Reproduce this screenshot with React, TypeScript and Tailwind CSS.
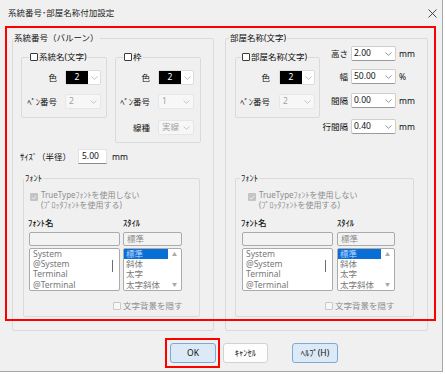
import React from 'react';

function Chevron({ color = '#9a9a9a' }: { color?: string }) {
  return (
    <svg width="7" height="4" viewBox="0 0 7 4" className="shrink-0">
      <path d="M0.5 0.5 L3.5 3.3 L6.5 0.5" fill="none" stroke={color} strokeWidth="0.9" />
    </svg>
  );
}

function Check({ checked = false, disabled = false }: { checked?: boolean; disabled?: boolean }) {
  if (checked) {
    return (
      <span className="flex h-[8px] w-[8px] shrink-0 items-center justify-center rounded-[1px] bg-[#c4c4c4]">
        <svg width="6" height="5" viewBox="0 0 6 5">
          <path d="M0.8 2.6 L2.3 4 L5.2 0.9" fill="none" stroke="#f4f4f4" strokeWidth="0.9" />
        </svg>
      </span>
    );
  }
  return (
    <span
      className={`block h-[8px] w-[8px] shrink-0 rounded-[1px] border ${
        disabled ? 'border-[#c8c8c8] bg-[#f7f7f7]' : 'border-[#3a3a3a] bg-white'
      }`}
    />
  );
}

function ColorCombo() {
  return (
    <div className="flex h-[15px] w-[36px] shrink-0 items-stretch rounded-[2px] border border-[#dcdcdc] bg-white">
      <div className="flex w-[22px] items-center justify-center bg-black leading-none text-white">2</div>
      <div className="flex flex-1 items-center justify-center">
        <Chevron color="#b8b8b8" />
      </div>
    </div>
  );
}

function GrayCombo({ value }: { value: string }) {
  return (
    <div className="flex h-[15px] w-[36px] shrink-0 items-center justify-between rounded-[2px] border border-[#e6e6e6] bg-[#f7f7f7] pl-[3px] pr-[3px] leading-none text-[#a3a3a3]">
      <span>{value}</span>
      <Chevron color="#c0c0c0" />
    </div>
  );
}

function ValueCombo({ value }: { value: string }) {
  return (
    <div className="flex h-[15px] w-[45px] shrink-0 items-center justify-between rounded-[2px] border border-[#cfcfcf] border-b-[#9a9a9a] bg-white pl-[2px] pr-[3px] leading-none">
      <span>{value}</span>
      <Chevron color="#8a8a8a" />
    </div>
  );
}

function Row({ label, labelW, gap, mt, children }: { label: string; labelW: string; gap: string; mt: string; children: React.ReactNode }) {
  return (
    <div className={`flex items-center ${mt}`}>
      <span className={`${labelW} ${gap} shrink-0 text-right leading-[12px]`}>{label}</span>
      {children}
    </div>
  );
}

function FontBox({
  width,
  legendMl,
  checkMl,
  colMl,
  colGap,
  styleW,
}: {
  width: string;
  legendMl: string;
  checkMl: string;
  colMl: string;
  colGap: string;
  styleW: string;
}) {
  return (
    <fieldset className={`h-[145px] ${width} rounded-[2px] border border-[#dadada]`}>
      <legend className={`${legendMl} px-[1px] leading-[12px]`}>ﾌｫﾝﾄ</legend>
      <div className="flex flex-col">
        <div className={`mt-[6px] ${checkMl} flex items-start gap-[3px]`}>
          <span className="mt-[3px]">
            <Check checked />
          </span>
          <div className="text-[8px] leading-[10px] text-[#8d8d8d]">
            <div>TrueTypeﾌｫﾝﾄを使用しない</div>
            <div>(ﾌﾟﾛｯﾀﾌｫﾝﾄを使用する)</div>
          </div>
        </div>

        <div className={`mt-[8px] ${colMl} flex ${colGap}`}>
          {/* font name column */}
          <div className="flex w-[91px] flex-col">
            <span className="-ml-[1px] font-medium leading-[10px]">ﾌｫﾝﾄ名</span>
            <div className="mt-[4px] h-[14px] rounded-[2px] border border-[#ababab] bg-[#f3f3f3]" />
            <div className="mt-[2px] flex h-[43px] rounded-[2px] border border-[#ababab] bg-white">
              <div className="flex-1 pl-[3px] leading-[10.2px] text-[#777]">
                <div>System</div>
                <div>@System</div>
                <div>Terminal</div>
                <div>@Terminal</div>
              </div>
              <div className="flex w-[14px] justify-center pt-[11px]">
                <div className="h-[12px] w-[1px] bg-[#6e6e6e]" />
              </div>
            </div>
          </div>

          {/* style column */}
          <div className={`flex ${styleW} flex-col`}>
            <span className="font-medium leading-[10px]">ｽﾀｲﾙ</span>
            <div className="mt-[4px] flex h-[14px] items-center rounded-[2px] border border-[#ababab] bg-[#f3f3f3] pl-[3px] leading-none text-[#8a8a8a]">
              標準
            </div>
            <div className="mt-[2px] flex h-[43px] rounded-[2px] border border-[#ababab] bg-white">
              <div className="flex-1 leading-[10.2px] text-[#777]">
                <div className="bg-[#0a6fd4] pl-[2px] text-[#bcd8ff]">標準</div>
                <div className="pl-[2px]">斜体</div>
                <div className="pl-[2px]">太字</div>
                <div className="pl-[2px]">太字斜体</div>
              </div>
              <div className="flex w-[13px] flex-col items-center justify-between py-[3px] text-[5px] leading-none text-[#a8a8a8]">
                <span>▲</span>
                <span>▼</span>
              </div>
            </div>
          </div>
        </div>

        <div className="ml-[89px] mt-[10px] flex items-center gap-[2px]">
          <Check disabled />
          <span className="leading-[10px] text-[#8d8d8d]">文字背景を隠す</span>
        </div>
      </div>
    </fieldset>
  );
}

export default function App() {
  return (
    <div className="relative h-[374px] w-[445px] overflow-hidden bg-white font-['Noto_Sans','Noto_Sans_CJK_JP',sans-serif] text-[8.5px] text-[#111]">
      <div className="flex h-[372px] w-[443px] flex-col border-b border-r border-[#a8a8a8] bg-[#f0f0f0]">
        {/* Title bar */}
        <div className="flex h-[26px] shrink-0 items-center justify-between pl-[8px] pr-[5px]">
          <span className="leading-[12px] text-[#222]">系統番号･部屋名称付加設定</span>
          <svg width="9" height="9" viewBox="0 0 9 9">
            <path d="M0.5 0.5 L8.5 8.5 M8.5 0.5 L0.5 8.5" stroke="#333" strokeWidth="0.9" />
          </svg>
        </div>

        {/* Group boxes */}
        <div className="flex gap-[11px] pl-[12px] pt-[6px]">
          {/* 系統番号 */}
          <fieldset className="h-[299px] w-[202px] rounded-[2px] border border-[#dadada]">
            <legend className="px-[1px] leading-[12px]">系統番号（バルーン）</legend>
            <div className="flex flex-col pl-[8px]">
              <div className="mt-[7px] flex items-start gap-[8px]">
                <fieldset className="h-[67px] w-[86px] rounded-[2px] border border-[#dadada]">
                  <legend className="ml-[7px] px-[1px] leading-[12px]">
                    <span className="inline-flex items-center gap-[1px]">
                      <Check />
                      系統名(文字)
                    </span>
                  </legend>
                  <Row label="色" labelW="w-[35px]" gap="mr-[8px]" mt="mt-[6px]">
                    <ColorCombo />
                  </Row>
                  <Row label="ﾍﾟﾝ番号" labelW="w-[35px]" gap="mr-[8px]" mt="mt-[9px]">
                    <GrayCombo value="2" />
                  </Row>
                </fieldset>

                <fieldset className="h-[92px] w-[86px] rounded-[2px] border border-[#dadada]">
                  <legend className="ml-[7px] px-[1px] leading-[12px]">
                    <span className="inline-flex items-center gap-[1px]">
                      <Check />枠
                    </span>
                  </legend>
                  <Row label="色" labelW="w-[34px]" gap="mr-[8px]" mt="mt-[6px]">
                    <ColorCombo />
                  </Row>
                  <Row label="ﾍﾟﾝ番号" labelW="w-[34px]" gap="mr-[8px]" mt="mt-[9px]">
                    <GrayCombo value="1" />
                  </Row>
                  <Row label="線種" labelW="w-[34px]" gap="mr-[8px]" mt="mt-[11px]">
                    <GrayCombo value="実線" />
                  </Row>
                </fieldset>
              </div>

              <div className="mt-[6px] flex items-center">
                <span className="-ml-[1px] w-[58px] leading-[12px]">ｻｲｽﾞ（半径）</span>
                <div className="flex h-[15px] w-[29px] items-center border border-[#e2e2e2] border-b-[#8a8a8a] bg-white pl-[3px] leading-none">
                  5.00
                </div>
                <span className="ml-[5px] leading-[12px]">mm</span>
              </div>

              <div className="ml-[2px] mt-[8px]">
                <FontBox width="w-[177px]" legendMl="ml-0" checkMl="ml-[6px]" colMl="ml-[5px]" colGap="gap-[3px]" styleW="w-[59px]" />
              </div>
            </div>
          </fieldset>

          {/* 部屋名称 */}
          <fieldset className="h-[299px] w-[203px] rounded-[2px] border border-[#dadada]">
            <legend className="ml-[3px] px-[1px] leading-[12px]">部屋名称(文字)</legend>
            <div className="flex h-[128px] items-start pl-[9px]">
              <fieldset className="mt-[7px] h-[67px] w-[85px] rounded-[2px] border border-[#dadada]">
                <legend className="ml-[5px] px-[1px] leading-[12px]">
                  <span className="inline-flex items-center gap-[1px]">
                    <Check />
                    部屋名称(文字)
                  </span>
                </legend>
                <Row label="色" labelW="w-[34px]" gap="mr-[9px]" mt="mt-[6px]">
                  <ColorCombo />
                </Row>
                <Row label="ﾍﾟﾝ番号" labelW="w-[34px]" gap="mr-[9px]" mt="mt-[9px]">
                  <GrayCombo value="2" />
                </Row>
              </fieldset>

              <div className="ml-[1px] flex flex-col pt-[2px]">
                {[
                  { label: '高さ', value: '2.00', unit: 'mm', mt: 'mt-0' },
                  { label: '幅', value: '50.00', unit: '%', mt: 'mt-[8px]' },
                  { label: '間隔', value: '0.00', unit: 'mm', mt: 'mt-[9px]' },
                  { label: '行間隔', value: '0.40', unit: 'mm', mt: 'mt-[11px]' },
                ].map((r) => (
                  <div key={r.label} className={`flex items-center ${r.mt}`}>
                    <span className="w-[27px] text-right leading-[12px]">{r.label}</span>
                    <span className="ml-[3px]">
                      <ValueCombo value={r.value} />
                    </span>
                    <span className="ml-[3px] leading-[12px]">{r.unit}</span>
                  </div>
                ))}
              </div>
            </div>

            <div className="ml-[9px]">
              <FontBox width="w-[179px]" legendMl="ml-[4px]" checkMl="ml-[12px]" colMl="ml-[6px]" colGap="gap-[4px]" styleW="w-[58px]" />
            </div>
          </fieldset>
        </div>

        {/* Buttons */}
        <div className="flex pl-[170px] pt-[12px]">
          <button className="flex h-[20px] w-[46px] items-center justify-center rounded-[3px] border border-[#7ea8d6] bg-[#dce9f6] leading-none">
            OK
          </button>
          <button className="ml-[7px] flex h-[20px] w-[45px] items-center justify-center rounded-[3px] border border-[#d2d2d2] bg-[#fdfdfd] leading-none">
            ｷｬﾝｾﾙ
          </button>
          <button className="ml-[24px] flex h-[20px] w-[46px] items-center justify-center rounded-[3px] border border-[#7ea8d6] bg-[#dce9f6] leading-none">
            ﾍﾙﾌﾟ(H)
          </button>
        </div>
      </div>

      {/* Red annotation frames */}
      <div className="pointer-events-none absolute left-[5px] top-[26px] h-[295px] w-[431px] border-2 border-[#ff0000]" />
      <div className="pointer-events-none absolute left-[165px] top-[338px] h-[30px] w-[55px] border-2 border-[#ff0000]" />
    </div>
  );
}
